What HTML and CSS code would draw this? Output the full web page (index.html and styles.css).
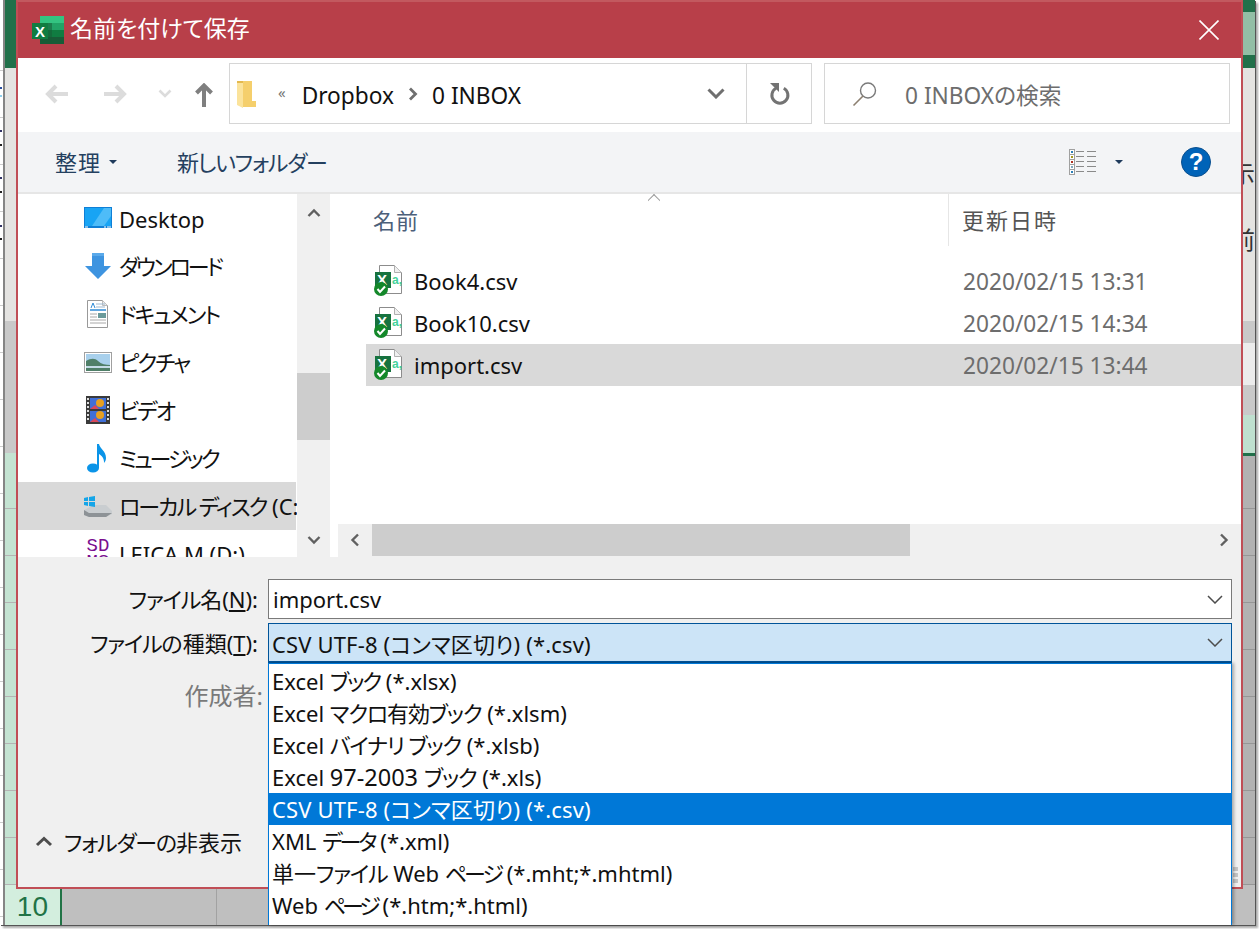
FILE: index.html
```html
<!DOCTYPE html>
<html lang="ja">

<head>
    <meta charset="UTF-8">
    <title>名前を付けて保存</title>
    <link rel="stylesheet" href="styles.css">
</head>

<body>
    <svg class="defs" width="0" height="0">
        <symbol id="csvIcon" viewBox="0 0 30 32">
            <path d="M6.5 .5h15l7 7v21h-22z" fill="#fff" stroke="#8c8c8c"/>
            <path d="M21.5 .5v7h7" fill="#f0f0f0" stroke="#b0b0b0"/>
            <text x="19" y="19" font-family="Liberation Sans" font-size="12" font-weight="700" fill="#45d29a">a,</text>
            <rect x="2" y="7" width="16" height="16" fill="#17733f"/>
            <text x="4" y="20" font-family="Liberation Sans" font-size="15" font-weight="700" fill="#fff">X</text>
            <circle cx="8" cy="24" r="7" fill="#14882a"/>
            <path d="M4.5 24l2.5 3 5-5.500" fill="none" stroke="#fff" stroke-width="2"/>
        </symbol>
        <symbol id="lineChevron" viewBox="0 0 16 9">
            <path d="M1 1l7 7 7-7" fill="none" stroke="#4d4d4d" stroke-width="1.500"/>
        </symbol>
    </svg>

    <div class="screen">
        <div class="sheet">
            <div class="ticks"></div>
            <div class="sheet-main">
                <div class="sheet-body">
                    <div class="strip">
                        <div class="seg seg-green seg-68"></div>
                        <div class="seg seg-light seg-253"></div>
                        <div class="seg seg-gray seg-132"></div>
                        <div class="seg seg-mint seg-fill"></div>
                    </div>
                    <div class="strip strip-right">
                        <div class="seg seg-green seg-12"></div>
                        <div class="seg seg-faded seg-43"></div>
                        <div class="seg seg-green seg-13"></div>
                        <div class="seg seg-light seg-253 strip-text">
                            <span class="glyph glyph-first">示</span>
                            <span class="glyph glyph-second">前</span>
                        </div>
                        <div class="seg seg-gray seg-22"></div>
                        <div class="seg seg-pale seg-42"></div>
                        <div class="seg seg-gray seg-30"></div>
                        <div class="seg seg-mint2 seg-38"></div>
                        <div class="seg seg-green seg-3"></div>
                        <div class="seg seg-dark seg-fill"></div>
                    </div>
                </div>
                <div class="sheet-foot">
                    <div class="row-head">10</div>
                    <div class="cell cell-first"></div>
                    <div class="cell"></div>
                </div>
            </div>
        </div>

        <div class="dialog">
            <div class="titlebar">
                <svg class="app-icon" width="32" height="28" viewBox="0 0 32 28">
                    <rect x="8" width="24" height="7" fill="#33c481"/>
                    <rect x="8" y="7" width="24" height="7" fill="#21a366"/>
                    <rect x="8" y="14" width="24" height="7" fill="#107c41"/>
                    <rect x="8" y="21" width="24" height="7" fill="#185c37"/>
                    <rect x="8" y="7" width="12" height="21" fill="#185c37" opacity=".55"/>
                    <rect y="7" width="16" height="16" fill="#107c41"/>
                    <text x="3" y="20.500" font-family="Liberation Sans" font-size="15" font-weight="700" fill="#fff">X</text>
                </svg>
                <span class="title">名前を付けて保存</span>
                <svg class="close-icon" width="20" height="20" viewBox="0 0 20 20">
                    <path d="M.5.5l19 19M19.500.5l-19 19" stroke="#fff" stroke-width="1.600"/>
                </svg>
            </div>

            <div class="navbar">
                <div class="nav-arrows">
                    <svg class="arrow-back" width="24" height="20" viewBox="0 0 24 20">
                        <path d="M11 2l-8 8 8 8M3 10h20" fill="none" stroke="#dcdcdc" stroke-width="4"/>
                    </svg>
                    <svg class="arrow-forward" width="24" height="20" viewBox="0 0 24 20">
                        <path d="M13 2l8 8-8 8M1 10h20" fill="none" stroke="#dcdcdc" stroke-width="4"/>
                    </svg>
                    <svg class="arrow-recent" width="14" height="9" viewBox="0 0 14 9">
                        <path d="M1.500 1.500l5.500 5.500 5.500-5.500" fill="none" stroke="#dcdcdc" stroke-width="2.600"/>
                    </svg>
                    <svg class="arrow-up" width="18" height="24" viewBox="0 0 18 24">
                        <path d="M1.500 10L9 2.500l7.500 7.500M9 3v21" fill="none" stroke="#7f7f7f" stroke-width="4"/>
                    </svg>
                </div>
                <div class="address">
                    <div class="crumbs">
                        <svg class="folder-icon" width="19" height="28" viewBox="0 0 19 28">
                            <path d="M5 1h10v20h4v6H5z" fill="#f5cf6c"/>
                            <path d="M0 1l6 1v26l-6-3z" fill="#fbe39b"/>
                            <path d="M0 1h6v2H0z" fill="#e4b94e"/>
                        </svg>
                        <span class="crumb-more">«</span>
                        <span class="crumb">Dropbox</span>
                        <svg class="crumb-sep" width="10" height="14" viewBox="0 0 10 14">
                            <path d="M2 1.500l5.500 5.500-5.500 5.500" fill="none" stroke="#6f6f6f" stroke-width="2.800"/>
                        </svg>
                        <span class="crumb">0 INBOX</span>
                        <svg class="crumb-drop" width="18" height="11" viewBox="0 0 18 11">
                            <path d="M1.500 1.500l7.500 7.500 7.500-7.500" fill="none" stroke="#6f6f6f" stroke-width="3"/>
                        </svg>
                    </div>
                    <div class="refresh">
                        <svg width="22" height="24" viewBox="0 0 22 24">
                            <path d="M14.800 6.200a8 8 0 1 1-7.800 0" fill="none" stroke="#737373" stroke-width="3"/>
                            <path d="M1 1h9v9z" fill="#737373"/>
                        </svg>
                    </div>
                </div>
                <div class="search">
                    <svg width="26" height="26" viewBox="0 0 26 26">
                        <circle cx="16" cy="9.500" r="7.500" fill="none" stroke="#7a7a7a" stroke-width="1.400"/>
                        <path d="M11 15L1.500 24.500" stroke="#8c7f70" stroke-width="1.600"/>
                    </svg>
                    <span class="search-text">0 INBOXの検索</span>
                </div>
            </div>

            <div class="toolbar">
                <span class="tool tool-first">整理</span>
                <span class="caret"></span>
                <span class="tool tool-new tight-1">新しいフォルダー</span>
                <div class="tool-right">
                    <svg width="28" height="26" viewBox="0 0 28 26">
                        <rect x=".5" y=".5" width="5" height="25" fill="#fff" stroke="#a0a0a0"/>
                        <path d="M.5 5.500h5M.5 10.500h5M.5 15.500h5M.5 20.500h5" stroke="#a0a0a0"/>
                        <path d="M2 2h2v2H2z" fill="#2b7fb8"/>
                        <path d="M2 7h2v2H2z" fill="#a89a1e"/>
                        <path d="M2 12h2v2H2z" fill="#b03020"/>
                        <path d="M2 17h2v2H2z" fill="#7fa8c0"/>
                        <path d="M2 22h2v2H2z" fill="#2b7fb8"/>
                        <path d="M7 2.500h8M18 2.500h9M7 7.500h8M18 7.500h9M7 12.500h8M18 12.500h9M7 17.500h8M18 17.500h9M7 22.500h8M18 22.500h9" stroke="#8a8a8a"/>
                    </svg>
                    <span class="caret caret-view"></span>
                    <span class="help">?</span>
                </div>
            </div>

            <div class="browser">
                <div class="tree">
                    <div class="tree-item tree-latin">
                        <svg class="tree-icon" width="28" height="22" viewBox="0 0 28 22">
                            <rect width="28" height="21" fill="#0f7fd6"/>
                            <rect x="1" y="1" width="26" height="18" fill="#18a4f4"/>
                            <path d="M8 19L20 1h7v8L20 19z" fill="#4ebcf8"/>
                            <path d="M1 20h3M20 20h2M23 20h4" stroke="#fff"/>
                        </svg>
                        <span>Desktop</span>
                    </div>
                    <div class="tree-item">
                        <svg class="tree-icon" width="28" height="27" viewBox="0 0 28 27">
                            <path d="M8 0h12v13h7L14 26 1 13h7z" fill="#3e94e0"/>
                            <path d="M8 0h12v3H8z" fill="#5aa9ea"/>
                        </svg>
                        <span class="tight-3">ダウンロード</span>
                    </div>
                    <div class="tree-item">
                        <svg class="tree-icon" width="28" height="28" viewBox="0 0 28 28">
                            <path d="M3.500.5h15l5 5v22h-20z" fill="#fff" stroke="#999"/>
                            <path d="M18.500.5v5h5" fill="#eee" stroke="#bbb"/>
                            <path d="M6 10h16" stroke="#2d8ad6" stroke-width="1.500"/>
                            <path d="M7 8l2-5 2 5" fill="none" stroke="#2d8ad6"/>
                            <path d="M12 4h9M12 7h9" stroke="#9db8d0"/>
                            <rect x="14" y="13" width="8" height="5" fill="#6b9a9a"/>
                            <path d="M6 14h7M6 17h7M6 20h16M6 23h16" stroke="#a8a8a8"/>
                        </svg>
                        <span class="tight-2">ドキュメント</span>
                    </div>
                    <div class="tree-item">
                        <svg class="tree-icon" width="28" height="21" viewBox="0 0 28 21">
                            <rect x=".5" y=".5" width="27" height="20" fill="#fff" stroke="#a0a0a0"/>
                            <rect x="2" y="2" width="24" height="17" fill="#a8d0ec"/>
                            <path d="M2 9c5-3 9-3 12 0s8 4 12 4v6H2z" fill="#4f7f68"/>
                            <path d="M2 14h24v2H2z" fill="#c4dbe6"/>
                        </svg>
                        <span class="tight-2">ピクチャ</span>
                    </div>
                    <div class="tree-item">
                        <svg class="tree-icon" width="28" height="28" viewBox="0 0 28 28">
                            <rect x="2" width="24" height="28" fill="#3a3a3a"/>
                            <rect x="6" y="2" width="16" height="11" fill="#3f6fd8"/>
                            <rect x="6" y="15" width="16" height="11" fill="#3f6fd8"/>
                            <circle cx="16" cy="7" r="4" fill="#e8a020"/>
                            <path d="M6 13l5-4 4 4z" fill="#d8485a"/>
                            <circle cx="16" cy="19" r="4" fill="#e8a020"/>
                            <path d="M6 26l5-4 4 4z" fill="#d8485a"/>
                            <path d="M4 2v24" stroke="#ddd" stroke-width="2" stroke-dasharray="2 2"/>
                            <path d="M24 2v24" stroke="#ddd" stroke-width="2" stroke-dasharray="2 2"/>
                        </svg>
                        <span class="tight-2">ビデオ</span>
                    </div>
                    <div class="tree-item">
                        <svg class="tree-icon" width="28" height="29" viewBox="0 0 28 29">
                            <ellipse cx="9" cy="24" rx="6" ry="4.500" fill="#0a94e8"/>
                            <path d="M13 24V0h2c1 5 7 7 7 14 0 2-1 4-2 5 .5-5-3-8-5-9v14z" fill="#0a94e8"/>
                        </svg>
                        <span class="tight-3">ミュージック</span>
                    </div>
                    <div class="tree-item tree-selected">
                        <svg class="tree-icon" width="28" height="22" viewBox="0 0 28 22">
                            <path d="M0 15l10-5h12l6 6v3l-6 3H5l-5-2z" fill="#c9cdd0"/>
                            <path d="M0 15l5 3h23l-6 4H5l-5-2z" fill="#8d9296"/>
                            <path d="M0 3l4-1v4H0zM5 2l6-1v5H5zM0 7h4v4l-4-1zM5 7h6v5l-6-1z" fill="#15a5e8"/>
                        </svg>
                        <span><span class="tight-2">ローカル ディスク</span> (C:)</span>
                    </div>
                    <div class="tree-item tree-last">
                        <span class="sd-icon">SD<br>MS</span>
                        <span>LEICA M (D:)</span>
                    </div>
                </div>
                <div class="vscroll">
                    <svg class="scroll-arrow" width="14" height="10" viewBox="0 0 14 10">
                        <path d="M1.500 8l5.500-5.500 5.500 5.500" fill="none" stroke="#606060" stroke-width="2.400"/>
                    </svg>
                    <div class="vscroll-track">
                        <div class="vscroll-thumb"></div>
                    </div>
                    <svg class="scroll-arrow" width="14" height="10" viewBox="0 0 14 10">
                        <path d="M1.500 2l5.500 5.500 5.500-5.500" fill="none" stroke="#606060" stroke-width="2.400"/>
                    </svg>
                </div>
                <div class="files">
                    <div class="file-head">
                        <span class="sort-caret"></span>
                        <span class="col-name">名前</span>
                        <span class="col-date">更新日時</span>
                    </div>
                    <div class="file-rows">
                        <div class="file-row">
                            <span class="col-name"><svg width="30" height="32"><use href="#csvIcon"/></svg>Book4.csv</span>
                            <span class="col-date">2020/02/15 13:31</span>
                        </div>
                        <div class="file-row">
                            <span class="col-name"><svg width="30" height="32"><use href="#csvIcon"/></svg>Book10.csv</span>
                            <span class="col-date">2020/02/15 14:34</span>
                        </div>
                        <div class="file-row file-selected">
                            <span class="col-name"><svg width="30" height="32"><use href="#csvIcon"/></svg>import.csv</span>
                            <span class="col-date">2020/02/15 13:44</span>
                        </div>
                    </div>
                    <div class="hscroll">
                        <div class="hscroll-btn">
                            <svg width="10" height="14" viewBox="0 0 10 14">
                                <path d="M8 1.500l-5.500 5.500 5.500 5.500" fill="none" stroke="#606060" stroke-width="2.400"/>
                            </svg>
                        </div>
                        <div class="hscroll-thumb"></div>
                        <div class="hscroll-btn hscroll-end">
                            <svg width="10" height="14" viewBox="0 0 10 14">
                                <path d="M2 1.500l5.500 5.500-5.500 5.500" fill="none" stroke="#606060" stroke-width="2.400"/>
                            </svg>
                        </div>
                    </div>
                </div>
            </div>

            <div class="footer">
                <div class="form">
                    <label class="form-label"><span class="tight-1">ファイル</span>名(<u>N</u>):</label>
                    <div class="combo">
                        <span>import.csv</span>
                        <svg width="16" height="9"><use href="#lineChevron"/></svg>
                    </div>
                    <label class="form-label"><span class="tight-1">ファイル</span>の種類(<u>T</u>):</label>
                    <div class="combo combo-open">
                        <span class="csv-line">CSV UTF-8 (コンマ区切り) (*.csv)</span>
                        <svg width="16" height="9"><use href="#lineChevron"/></svg>
                    </div>
                    <label class="form-label form-author">作成者:</label>
                </div>
                <div class="folder-toggle">
                    <svg width="18" height="11" viewBox="0 0 18 11">
                        <path d="M2 9l7-6.500 7 6.500" fill="none" stroke="#4d4d4d" stroke-width="3"/>
                    </svg>
                    <span><span class="tight-1">フォルダーの</span>非表示</span>
                </div>
            </div>

            <div class="grip"></div>

            <ul class="dropdown">
                <li>Excel <span class="tight-2">ブック</span> (*.xlsx)</li>
                <li>Excel <span class="tight-1">マクロ有効ブック</span> (*.xlsm)</li>
                <li>Excel <span class="tight-1">バイナリ ブック</span> (*.xlsb)</li>
                <li>Excel <span class="num">97-2003</span> <span class="tight-1">ブック</span> (*.xls)</li>
                <li class="dropdown-active"><span class="csv-line">CSV UTF-8 (コンマ区切り) (*.csv)</span></li>
                <li>XML <span class="tight-3">データ</span> (*.xml)</li>
                <li>単一<span class="tight-1">ファイル</span> Web <span class="tight-3">ページ</span> (*.mht;*.mhtml)</li>
                <li>Web <span class="tight-4">ページ</span> (*.htm;*.html)</li>
            </ul>
        </div>
    </div>
</body>

</html>
```

FILE: styles.css
```css
* {
    box-sizing: border-box;
}

html,
body {
    margin: 0;
    padding: 0;
    background: #ffffff;
}

body {
    width: 1259px;
    height: 929px;
    overflow: hidden;
    font-family: "Noto Sans", "Noto Sans CJK JP", sans-serif;
    font-size: 22px;
    font-feature-settings: "palt";
    color: #111111;
}

.defs {
    position: absolute;
}

/* kana in the reference font runs narrower than Noto's */
.tight-1 { letter-spacing: -1.2px; }
.tight-2 { letter-spacing: -2px; }
.tight-3 { letter-spacing: -3px; }
.tight-4 { letter-spacing: -4px; }

.num { font-size: 23.5px; }

.csv-line { letter-spacing: .15px; }

.screen {
    position: relative;
    width: 1259px;
    height: 929px;
}

/* excel window behind the dialog */
.sheet {
    display: flex;
    width: 1255px;
    height: 925px;
    box-shadow: 1px 1px 0 #555555, 3px 3px 2px #aaaaaa;
}

.ticks {
    position: relative;
    width: 5px;
    background: repeating-linear-gradient(#ffffff 0, #ffffff 46px, #cccccc 46px, #cccccc 47px) 0 24px;
    border-right: 2px solid #858585;
}

.ticks::before {
    content: "";
    position: absolute;
    left: 0;
    top: 87px;
    width: 2px;
    height: 2px;
    background: #2a4fa0;
    box-shadow: 0 8px 0 #8fd0ee, 0 43px 0 #333366, 0 57px 0 #222222, 0 90px 0 #333366, 0 104px 0 #222222, 0 138px 0 #333366, 0 151px 0 #222222;
}

.sheet-main {
    flex: 1;
    display: flex;
    flex-direction: column;
}

.sheet-body {
    flex: 1;
    display: flex;
    justify-content: space-between;
}

.strip {
    width: 11px;
    display: flex;
    flex-direction: column;
}

.strip-right {
    width: 12px;
}

.seg-3 { height: 3px; }
.seg-12 { height: 12px; }
.seg-13 { height: 13px; }
.seg-22 { height: 22px; }
.seg-30 { height: 30px; }
.seg-38 { height: 38px; }
.seg-42 { height: 42px; }
.seg-43 { height: 43px; }
.seg-68 { height: 68px; }
.seg-132 { height: 132px; }
.seg-253 { height: 253px; }
.seg-fill { flex: 1; }

.seg-green { background: #21704a; }
.seg-faded { background: #93bfa6; }
.seg-light { background: #e4e3e1; }
.seg-gray { background: #c9c9c9; }
.seg-pale { background: #ececec; }
.seg-mint2 { background: #bfe0cf; }

.seg-mint {
    background: repeating-linear-gradient(#c4e3d2 0, #c4e3d2 46px, #b4b4b4 46px, #b4b4b4 47px) 0 9px;
}

.seg-dark {
    background: repeating-linear-gradient(#b2b2b2 0, #b2b2b2 46px, #969696 46px, #969696 47px) 0 6px;
}

.strip-text {
    position: relative;
    overflow: hidden;
}

.glyph {
    position: absolute;
    left: -12px;
    font-size: 24px;
    line-height: 28px;
    color: #333333;
}

.glyph-first { top: 92px; }
.glyph-second { top: 158px; }

.sheet-foot {
    height: 40px;
    display: flex;
    background: #bfbfbf;
}

.row-head {
    width: 57px;
    background: #d3eede;
    border-right: 2px solid #217346;
    color: #217346;
    font-family: "Liberation Sans", sans-serif;
    font-size: 28px;
    line-height: 44px;
    text-align: right;
    padding-right: 12px;
}

.cell {
    width: 155px;
    border-right: 1px solid #a2a2a2;
}

/* save dialog */
.dialog {
    position: absolute;
    left: 16px;
    top: 0;
    width: 1227px;
    height: 889px;
    display: flex;
    flex-direction: column;
    background: #ffffff;
    border: 2px solid #c04e56;
    border-top-color: #c2595f;
}

.titlebar {
    height: 56px;
    flex: none;
    display: flex;
    align-items: center;
    padding: 0 22px 0 14px;
    background: #b83f49;
    color: #ffffff;
}

.app-icon {
    margin-right: 6px;
}

.title {
    font-size: 23px;
    margin-bottom: 6px;
}

.close-icon {
    margin-left: auto;
}

.navbar {
    height: 74px;
    flex: none;
    display: flex;
    align-items: flex-start;
    padding-top: 5px;
    background: #ffffff;
}

.nav-arrows {
    width: 211px;
    height: 61px;
    display: flex;
    align-items: center;
    padding-left: 27px;
}

.arrow-forward { margin-left: 34px; }
.arrow-recent { margin-left: 31px; }
.arrow-up { margin-left: 23px; margin-top: 2px; }

.address {
    width: 583px;
    height: 61px;
    display: flex;
    border: 1px solid #d6d6d6;
}

.crumbs {
    flex: 1;
    display: flex;
    align-items: center;
    padding: 0 21px 0 7px;
    border-right: 1px solid #d6d6d6;
    font-size: 22.7px;
}

.crumb {
    margin-top: 3px;
}

.crumb-more {
    margin: 0 16px 4px 22px;
    font-size: 15px;
    color: #777777;
}

.crumb-sep { margin: 0 14px; }

.crumb-drop { margin-left: auto; }

.refresh {
    width: 64px;
    display: flex;
    align-items: center;
    justify-content: center;
    padding-left: 2px;
}

.search {
    width: 406px;
    height: 61px;
    margin-left: 12px;
    display: flex;
    align-items: center;
    padding-left: 27px;
    border: 1px solid #d6d6d6;
}

.search-text {
    margin: 2px 0 0 27px;
    font-size: 22.7px;
    color: #6d6d6d;
}

.toolbar {
    height: 62px;
    flex: none;
    display: flex;
    align-items: center;
    padding-left: 37px;
    background: #f3f4f6;
    border-bottom: 2px solid #e6e6e6;
    color: #24405f;
}

.tool {
    margin-bottom: 3px;
}

.tool-first { letter-spacing: 1px; }

.caret {
    width: 0;
    height: 0;
    margin-left: 8px;
    border-left: 4px solid transparent;
    border-right: 4px solid transparent;
    border-top: 4px solid #1f3a5c;
}

.tool-new {
    margin-left: 60px;
}

.tool-right {
    margin-left: auto;
    display: flex;
    align-items: center;
    padding-right: 30px;
}

.caret-view {
    margin-left: 18px;
}

.help {
    width: 30px;
    height: 30px;
    margin-left: 58px;
    border-radius: 50%;
    background: #0063b8;
    border: 1px solid #0a4f8f;
    color: #ffffff;
    font-family: "Liberation Sans", sans-serif;
    font-size: 24px;
    font-weight: 700;
    line-height: 28px;
    text-align: center;
}

.browser {
    height: 363px;
    flex: none;
    display: flex;
    overflow: hidden;
}

.tree {
    width: 279px;
    flex: none;
    overflow: hidden;
    white-space: nowrap;
}

.tree-item {
    height: 48px;
    display: flex;
    align-items: center;
    padding-left: 66px;
}

.tree-item > span:last-child {
    margin-bottom: 3px;
}

.tree-item.tree-latin > span:last-child {
    margin: 2px 0 0;
}

.tree-selected {
    background: #d9d9d9;
    width: 278px;
}

.tree-icon,
.sd-icon {
    width: 28px;
    flex: none;
    margin-right: 7px;
}

.tree-last {
    align-items: flex-start;
    padding-top: 8px;
}

.tree-item.tree-last > span:last-child {
    margin: 1px 0 0;
}

.sd-icon {
    font-family: "Liberation Mono", monospace;
    font-size: 19px;
    line-height: 16px;
    color: #7a0f8f;
    text-align: center;
}

.vscroll {
    width: 33px;
    flex: none;
    display: flex;
    flex-direction: column;
    align-items: center;
    padding: 14px 0 12px;
    background: #f0f0f0;
}

.vscroll-track {
    flex: 1;
    width: 33px;
    padding-top: 155px;
}

.vscroll-thumb {
    height: 67px;
    background: #cdcdcd;
}

.files {
    flex: 1;
    margin-left: 8px;
    display: flex;
    flex-direction: column;
    position: relative;
}

.file-head {
    height: 52px;
    display: flex;
    align-items: flex-start;
    padding-left: 35px;
    color: #4c607a;
    position: relative;
}

.file-head .col-name {
    width: 576px;
    height: 52px;
    line-height: 52px;
    border-right: 1px solid #e6e6e6;
    letter-spacing: 1px;
}

.file-head .col-date {
    padding-left: 13px;
    color: #555555;
    letter-spacing: 2px;
    line-height: 52px;
}

.sort-caret {
    position: absolute;
    left: 310px;
    top: 0;
    width: 12px;
    height: 12px;
    overflow: hidden;
}

.sort-caret::before {
    content: "";
    display: block;
    width: 9px;
    height: 9px;
    margin: 2px 0 0 1px;
    transform: rotate(45deg);
    border-left: 1px solid #9a9a9a;
    border-top: 1px solid #9a9a9a;
}

.file-rows {
    flex: 1;
    padding: 14px 0 0 28px;
}

.file-row {
    height: 42px;
    display: flex;
    align-items: center;
}

.file-selected {
    background: #d9d9d9;
}

.file-row .col-name {
    width: 597px;
    display: flex;
    align-items: center;
    padding-left: 7px;
}

.file-row .col-name svg {
    margin-right: 11px;
}

.file-row .col-date {
    font-size: 22.7px;
    color: #6d6d6d;
}

.hscroll {
    height: 33px;
    flex: none;
    display: flex;
    background: #f0f0f0;
}

.hscroll-btn {
    width: 34px;
    height: 32px;
    display: flex;
    align-items: center;
    justify-content: center;
}

.hscroll-thumb {
    width: 538px;
    height: 32px;
    background: #cdcdcd;
}

.hscroll-end {
    margin-left: auto;
}

.footer {
    flex: 1;
    display: flex;
    flex-direction: column;
    padding-top: 22px;
    background: #f0f0f0;
}

.form {
    display: grid;
    grid-template-columns: 250px 964px;
    grid-auto-rows: 40px;
    row-gap: 4px;
}

.form-label {
    line-height: 40px;
    text-align: right;
    padding-right: 10px;
}

.form-author {
    grid-column: 1;
    margin-top: 9px;
    padding-right: 5px;
    font-size: 24px;
    color: #7a7a7a;
}

.combo {
    display: flex;
    align-items: center;
    justify-content: space-between;
    padding: 0 8px 0 4px;
    background: #ffffff;
    border: 1px solid #7a7a7a;
}

.combo-open {
    background: #cce4f7;
    border: 1px solid #005499;
    border-bottom-width: 2px;
    padding-left: 3px;
}

.folder-toggle {
    margin-top: auto;
    margin-bottom: 30px;
    display: flex;
    align-items: center;
    padding-left: 17px;
}

.folder-toggle > span {
    margin-left: 11px;
}

.grip {
    position: absolute;
    left: 1215px;
    top: 865px;
    width: 5px;
    height: 17px;
    background: repeating-linear-gradient(#c4c4c4 0, #c4c4c4 4px, transparent 4px, transparent 6px);
}

.dropdown {
    position: absolute;
    left: 250px;
    top: 661px;
    width: 964px;
    height: 262px;
    margin: 0;
    padding: 1px 0 0;
    list-style: none;
    overflow: hidden;
    background: #ffffff;
    border: 1px solid #0078d7;
    border-bottom: 0;
    box-shadow: 2px 0 3px rgba(0, 0, 0, .3);
}

.dropdown li {
    height: 32px;
    line-height: 32px;
    padding-left: 3px;
    white-space: nowrap;
}

.dropdown .dropdown-active {
    background: #0078d7;
    color: #ffffff;
}
```
